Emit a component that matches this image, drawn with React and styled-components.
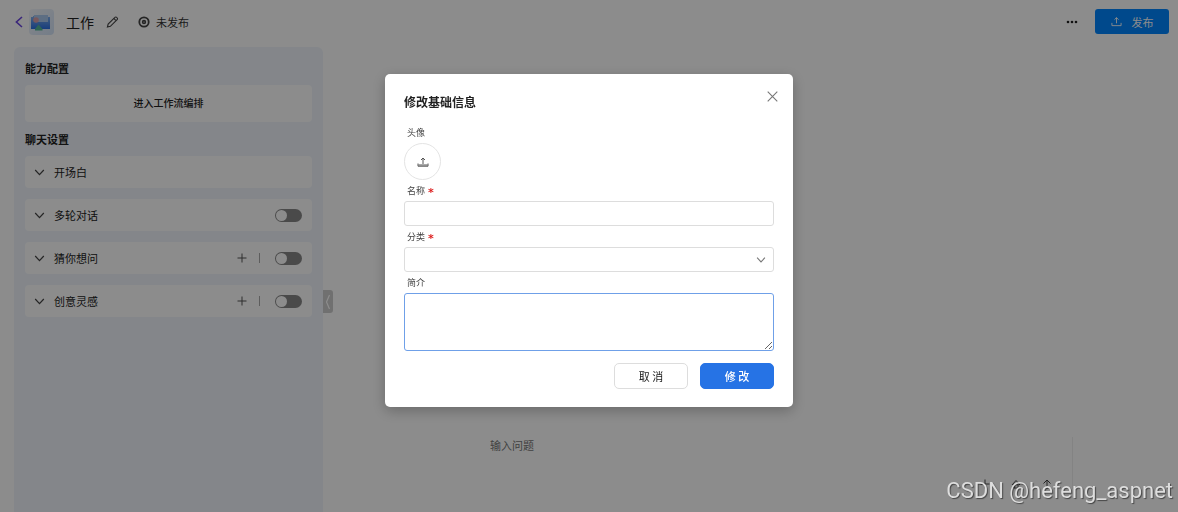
import styled, { createGlobalStyle } from "styled-components";

const settings = [
  { id: "opening", name: "开场白" },
  { id: "rounds", name: "多轮对话", toggle: true },
  { id: "guess", name: "猜你想问", add: true, toggle: true },
  { id: "ideas", name: "创意灵感", add: true, toggle: true },
];

const Chevron = ({ size = 11, color = "#444" }) => (
  <svg width={size} height={size} viewBox="0 0 11 11" fill="none" stroke={color} strokeWidth="1.2">
    <path d="M1.2 3 5.5 7.6 9.8 3" />
  </svg>
);

const UploadIcon = ({ size = 12, width = 1 }) => (
  <svg width={size} height={size} viewBox="0 0 12 12" fill="none" stroke="currentColor" strokeWidth={width}>
    <path d="M6 8V1.8M3.8 4 6 1.8 8.2 4M1 7.5v3h10v-3" />
  </svg>
);

const App = () => {
  return (
    <>
      <GlobalStyle />
      <Page>
        <Header>
          <BackButton aria-label="返回">
            <svg width="9" height="14" viewBox="0 0 9 14" fill="none" stroke="#6a45e0" strokeWidth="1.6">
              <path d="M8 2 2.4 7 8 12" />
            </svg>
          </BackButton>
          <AppLogo />
          <AppName>工作</AppName>
          <IconButton aria-label="编辑">
            <svg width="13" height="14" viewBox="0 0 14 14" fill="none" stroke="#444" strokeWidth="1.2">
              <path d="M1.5 12.5 2.3 9.3 9.6 2a1.3 1.3 0 0 1 1.9 0l.5.5a1.3 1.3 0 0 1 0 1.9L4.7 11.7ZM8.4 3.2l2.4 2.4" />
            </svg>
          </IconButton>
          <Status>
            <svg width="12" height="12" viewBox="0 0 12 12" fill="none" stroke="#444">
              <circle cx="6" cy="6" r="4.7" strokeWidth="1.8" />
              <circle cx="6" cy="6" r="1.4" strokeWidth="1.6" />
            </svg>
            未发布
          </Status>
          <HeaderRight>
            <IconButton aria-label="更多">
              <svg width="12" height="4" viewBox="0 0 12 4" fill="#222">
                <circle cx="2" cy="2" r="1.3" />
                <circle cx="6" cy="2" r="1.3" />
                <circle cx="10" cy="2" r="1.3" />
              </svg>
            </IconButton>
            <PublishButton>
              <UploadIcon size={11} />
              发布
            </PublishButton>
          </HeaderRight>
        </Header>
        <Body>
          <Sidebar>
            <SectionTitle>能力配置</SectionTitle>
            <FlowButton>进入工作流编排</FlowButton>
            <SectionTitle>聊天设置</SectionTitle>
            <SettingList>
              {settings.map(({ id, name, add, toggle }) => (
                <SettingRow key={id}>
                  <Chevron />
                  <label htmlFor={toggle ? id : undefined}>{name}</label>
                  {add && (
                    <AddButton aria-label={`添加${name}`}>
                      <svg width="10" height="10" viewBox="0 0 10 10" stroke="#555">
                        <path d="M5 .5v9M.5 5h9" />
                      </svg>
                    </AddButton>
                  )}
                  {toggle && <Switch type="checkbox" id={id} />}
                </SettingRow>
              ))}
            </SettingList>
          </Sidebar>
          <Handle aria-label="收起">
            <svg width="6" height="16" viewBox="0 0 6 16" fill="none" stroke="#fff" strokeWidth="1.2">
              <path d="M4.5 1 1.5 8l3 7" />
            </svg>
          </Handle>
          <Chat>
            <Composer>
              <Question aria-label="输入问题" placeholder="输入问题" />
              <Tools>
                <IconButton aria-label="添加">
                  <svg width="10" height="10" viewBox="0 0 10 10" stroke="#444">
                    <path d="M5 .5v9M.5 5h9" />
                  </svg>
                </IconButton>
                <IconButton aria-label="清空">
                  <svg width="10" height="10" viewBox="0 0 10 10" fill="none" stroke="#444">
                    <path d="M1 6 5 1.5 9 6M3 5v4h4V5" />
                  </svg>
                </IconButton>
                <IconButton aria-label="发送">
                  <svg width="10" height="10" viewBox="0 0 10 10" fill="none" stroke="#444">
                    <path d="M5 9.5V1M1.5 4.5 5 1l3.5 3.5" />
                  </svg>
                </IconButton>
              </Tools>
            </Composer>
          </Chat>
        </Body>
      </Page>
      <Mask>
        <Modal role="dialog" aria-modal="true" aria-labelledby="modal-title">
          <ModalHead>
            <h2 id="modal-title">修改基础信息</h2>
            <CloseButton aria-label="关闭">
              <svg width="11" height="11" viewBox="0 0 11 11" stroke="#777" strokeWidth="1.1">
                <path d="M.7.7l9.6 9.6M10.3.7.7 10.3" />
              </svg>
            </CloseButton>
          </ModalHead>
          <Label htmlFor="avatar">头像</Label>
          <AvatarButton id="avatar" type="button">
            <svg width="12" height="12" viewBox="0 0 12 12" fill="none" stroke="#555">
              <path d="M6 8V2M4 4l2-2 2 2M1 7.5v2.7h10V7.5M1.5 9h9" />
            </svg>
          </AvatarButton>
          <Label htmlFor="name">
            名称<Required>*</Required>
          </Label>
          <TextInput id="name" />
          <Label htmlFor="category">
            分类<Required>*</Required>
          </Label>
          <SelectWrap>
            <Select id="category" />
            <Chevron size={10} color="#777" />
          </SelectWrap>
          <Label htmlFor="intro">简介</Label>
          <Intro id="intro" />
          <Actions>
            <Button>取 消</Button>
            <Button $primary>修 改</Button>
          </Actions>
        </Modal>
      </Mask>
      <Watermark>CSDN @hefeng_aspnet</Watermark>
    </>
  );
};

const GlobalStyle = createGlobalStyle`
  * { box-sizing: border-box; }
  body { margin: 0; background: #fff; }
  body, button, input, select, textarea {
    font-family: "Noto Sans CJK SC", sans-serif;
    font-size: 11px;
    color: #222;
  }
  svg { display: block; flex: none; }
`;

const Page = styled.div`
  display: flex;
  flex-direction: column;
  height: 100vh;
  overflow: hidden;
`;

const Header = styled.header`
  display: flex;
  align-items: center;
  height: 43px;
  flex: none;
  padding: 0 9px 0 14px;
`;

const IconButton = styled.button`
  display: flex;
  padding: 0;
  border: 0;
  background: none;
`;

const BackButton = styled(IconButton)`
  margin-right: 6px;
`;

const Logo = ({ className }) => (
  <svg className={className} width="25" height="26" viewBox="0 0 25 26">
    <defs>
      <linearGradient id="backdrop" x1="0" y1="0" x2="1" y2="1">
        <stop offset="0" stopColor="#f4f7fb" />
        <stop offset="1" stopColor="#d3e3f8" />
      </linearGradient>
      <linearGradient id="screen" x1="0" y1="0" x2="0" y2="1">
        <stop offset="0" stopColor="#84b2ec" />
        <stop offset="1" stopColor="#2a70e4" />
      </linearGradient>
    </defs>
    <rect width="25" height="26" rx="4" fill="url(#backdrop)" />
    <path d="M2 8h2v-1h15v1h2v12H2Z" fill="url(#screen)" />
    <path d="M5 6h14v7H5Z" fill="#a9c8ee" />
    <circle cx="7" cy="11" r="2.8" fill="#dba0aa" />
    <path d="m6 20 3.5-4.500 4 4.500v1.500H6Z" fill="#55b89a" />
  </svg>
);

const AppLogo = styled(Logo)`
  margin-right: 12px;
`;

const AppName = styled.h1`
  margin: 0 12px 0 0;
  font-size: 14px;
  line-height: 20px;
  font-weight: 400;
`;

const Status = styled.span`
  display: flex;
  align-items: center;
  gap: 6px;
  margin-left: 19px;
  color: #333;
`;

const HeaderRight = styled.div`
  display: flex;
  align-items: center;
  gap: 17px;
  margin-left: auto;
`;

const PublishButton = styled.button`
  display: flex;
  align-items: center;
  justify-content: center;
  gap: 10px;
  width: 74px;
  height: 25px;
  padding: 0;
  border: 0;
  border-radius: 3px;
  background: #0085ff;
  color: #fff;
`;

const Body = styled.div`
  display: flex;
  flex: 1;
  min-height: 0;
  padding: 4px 0 0 14px;
`;

const Sidebar = styled.aside`
  width: 309px;
  flex: none;
  padding: 11px;
  border-radius: 6px 6px 0 0;
  background: #f0f5fc;
`;

const SectionTitle = styled.h2`
  margin: 0;
  font-size: 11px;
  line-height: 20px;
  font-weight: 700;
`;

const FlowButton = styled.button`
  display: block;
  width: 100%;
  height: 37px;
  margin: 7px 0;
  padding: 0 0 2px;
  border: 0;
  border-radius: 4px;
  background: #fff;
  font-size: 10px;
  font-weight: 500;
`;

const SettingList = styled.div`
  display: grid;
  gap: 11px;
  margin-top: 7px;
`;

const SettingRow = styled.div`
  display: flex;
  align-items: center;
  height: 32px;
  padding: 0 10px 0 9px;
  border-radius: 4px;
  background: #fff;

  label {
    flex: 1;
    margin-left: 9px;
  }
`;

const AddButton = styled(IconButton)`
  padding-right: 12px;
  margin-right: 15px;
  border-right: 1px solid #aaa;
`;

const Switch = styled.input`
  appearance: none;
  width: 27px;
  height: 13px;
  margin: 0;
  padding: 1px;
  border-radius: 7px;
  background: #888;

  &::before {
    content: "";
    display: block;
    width: 11px;
    height: 11px;
    border-radius: 50%;
    background: #fff;
  }

  &:checked {
    padding-left: 15px;
    background: #1f6fe5;
  }
`;

const Handle = styled(IconButton)`
  align-items: center;
  justify-content: center;
  width: 10px;
  height: 23px;
  margin-top: 243px;
  border-radius: 0 3px 3px 0;
  background: #ccc;
`;

const Chat = styled.main`
  display: flex;
  flex: 1;
  align-items: flex-end;
  padding: 0 105px 23px 148px;
`;

const Composer = styled.div`
  flex: 1;
  padding: 0 20px 0 9px;
  border-right: 1px solid #eee;
`;

const Question = styled.textarea`
  display: block;
  width: 100%;
  height: 42px;
  padding: 0;
  border: 0;
  line-height: 16px;
  resize: none;

  &::placeholder {
    color: #777;
  }
`;

const Tools = styled.div`
  display: flex;
  justify-content: flex-end;
  gap: 21px;
`;

const Mask = styled.div`
  position: fixed;
  inset: 0;
  padding-top: 74px;
  background: rgba(0, 0, 0, 0.45);
`;

const Modal = styled.div`
  width: 408px;
  margin: 0 auto;
  padding: 19px 19px 18px;
  border-radius: 5px;
  background: #fff;
  box-shadow: 0 4px 14px rgba(0, 0, 0, 0.25);
`;

const ModalHead = styled.div`
  display: flex;
  align-items: flex-start;
  justify-content: space-between;
  height: 29px;

  h2 {
    margin: 0;
    font-size: 12px;
    line-height: 18px;
    font-weight: 700;
  }
`;

const CloseButton = styled(IconButton)`
  margin: -2px -4px 0 0;
`;

const Label = styled.label`
  display: flex;
  height: 21px;
  padding-left: 3px;
  font-size: 9px;
  line-height: 21px;
  color: #444;
`;

const Required = styled.span`
  margin-left: 3px;
  padding-top: 2px;
  font-family: "DejaVu Sans", sans-serif;
  font-size: 11px;
  font-weight: 700;
  color: #d22;
`;

const AvatarButton = styled.button`
  display: flex;
  align-items: center;
  justify-content: center;
  width: 37px;
  height: 37px;
  padding: 0;
  border: 1px solid #e4e4e4;
  border-radius: 50%;
  background: #fff;
`;

const TextInput = styled.input`
  display: block;
  width: 100%;
  height: 25px;
  padding: 0 8px;
  border: 1px solid #ddd;
  border-radius: 3px;
`;

const SelectWrap = styled.div`
  display: flex;
  align-items: center;
  height: 25px;
  padding-right: 7px;
  border: 1px solid #ddd;
  border-radius: 3px;
`;

const Select = styled.select`
  appearance: none;
  flex: 1;
  height: 23px;
  padding: 0 8px;
  border: 0;
  background: none;
`;

const Intro = styled.textarea`
  display: block;
  width: 100%;
  height: 58px;
  padding: 4px 8px;
  border: 1px solid #6fa0e8;
  border-radius: 3px;
  resize: vertical;
`;

const Actions = styled.div`
  display: flex;
  justify-content: flex-end;
  gap: 12px;
  margin-top: 12px;
`;

const Button = styled.button`
  width: 74px;
  height: 26px;
  padding: 0;
  border: 1px solid ${({ $primary }) => ($primary ? "#2673e5" : "#ddd")};
  border-radius: 5px;
  background: ${({ $primary }) => ($primary ? "#2673e5" : "#fff")};
  color: ${({ $primary }) => ($primary ? "#fff" : "#222")};
  font-weight: ${({ $primary }) => ($primary ? 500 : 400)};
`;

const Watermark = styled.div`
  position: fixed;
  right: 5px;
  bottom: 6px;
  font: 22px/30px Roboto, sans-serif;
  color: #ddd;
  text-shadow: 1px 1px 1px rgba(0, 0, 0, 0.5);
`;

export default App;
